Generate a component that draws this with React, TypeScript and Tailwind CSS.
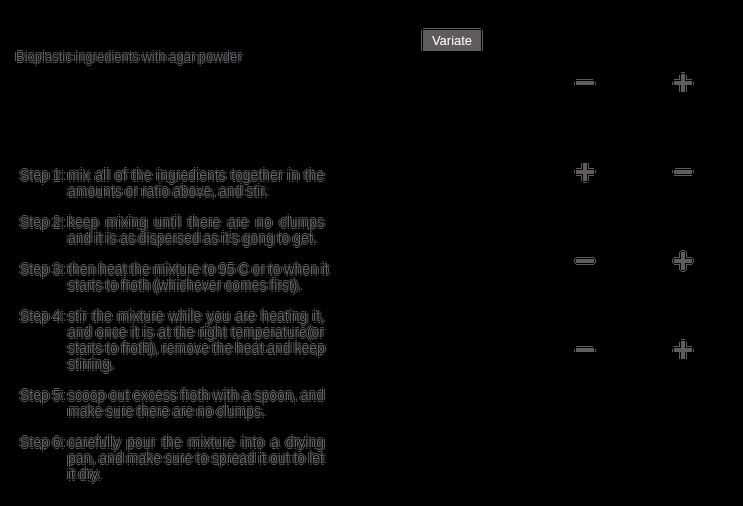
type Kind = "plus" | "minus";
type Edge = "top" | "bottom" | "round";

const steps = [
  { label: "Step 1:", lines: ["mix all of the ingredients together in the", "amounts or ratio above, and stir."] },
  { label: "Step 2:", lines: ["keep mixing until there are no clumps", "and it is as dispersed as it's gong to get."] },
  { label: "Step 3:", lines: ["then heat the mixture to 95 C or to when it", "starts to froth (whichever comes first)."] },
  {
    label: "Step 4:",
    lines: [
      "stir the mixture while you are heating it,",
      "and once it is at the right temperature(or",
      "starts to froth), remove the heat and keep",
      "stirring.",
    ],
  },
  { label: "Step 5:", lines: ["scoop out excess froth with a spoon, and", "make sure there are no clumps."] },
  {
    label: "Step 6:",
    lines: ["carefully pour the mixture into a drying", "pan, and make sure to spread it out to let", "it dry."],
  },
];

const rows: { kinds: [Kind, Kind]; edge: Edge }[] = [
  { kinds: ["minus", "plus"], edge: "top" },
  { kinds: ["plus", "minus"], edge: "bottom" },
  { kinds: ["minus", "plus"], edge: "round" },
  { kinds: ["minus", "plus"], edge: "top" },
];

const halo =
  "[text-shadow:1px_0_#000,-1px_0_#000,0_1px_#000,0_-1px_#000,2px_0_#626062,-2px_0_#626062,0_2px_#626062,0_-2px_#626062]";

const body = {
  plus: "M9 2h4v7h7v4h-7v7H9v-7H2V9h7z",
  minus: "M2 9h18v4H2z",
};

const edges = {
  plus: {
    top: "M9 0h4v1H9zM0 10h1v3H0zM21 10h1v3h-1zM7 3h1v5H2V7h5zM14 3h1v4h5v1h-6zM7 13h1v7H7zM14 13h1v7h-1z",
    bottom: "M9 21h4v1H9zM0 9h1v3H0zM21 9h1v3h-1zM7 2h1v6H2V7h5zM14 2h1v5h5v1h-6zM2 14h6v6H7v-5H2zM14 14h6v1h-5v5h-1z",
    round:
      "M9 0h4v1H9zM9 21h4v1H9zM8 1h1v1H8zM13 1h1v1h-1zM0 9h1v4H0zM21 9h1v4h-1zM1 8h1v1H1zM20 8h1v1h-1zM1 13h1v1H1zM20 13h1v1h-1zM7 2h1v6H2V7h5zM14 2h1v5h5v1h-6zM2 14h6v6H7v-5H2zM14 14h6v1h-5v5h-1zM8 20h1v1H8zM13 20h1v1h-1z",
  },
  minus: {
    top: "M2 7h17v1H2zM0 10h1v3H0zM21 10h1v3h-1z",
    bottom: "M3 7h16v1H3zM2 14h18v1H2zM0 9h1v3H0zM21 9h1v3h-1z",
    round: "M2 7h18v1H2zM2 14h18v1H2zM0 9h1v4H0zM21 9h1v4h-1zM1 8h1v1H1zM20 8h1v1h-1zM1 13h1v1H1zM20 13h1v1h-1z",
  },
};

function Sign({ kind, edge }: { kind: Kind; edge: Edge }) {
  return (
    <svg viewBox="0 0 22 24" className="h-6 w-[22px]" shapeRendering="crispEdges" aria-hidden="true">
      <path fill="#5e5c5d" d={body[kind]} />
      <path fill="#5e5c5d" d={edges[kind][edge]} />
    </svg>
  );
}

export default function App() {
  return (
    <main className="flex min-h-screen bg-black font-['Liberation_Sans',Arial,sans-serif] text-[#6a686a] antialiased">
      <section className="w-[423px] shrink-0 pt-[49px] pl-4 will-change-transform">
        <h1 className={`text-[13px] leading-4 ${halo}`}>Bioplastic ingredients with agar powder</h1>
        <ol className="mt-[102px] ml-1 flex flex-col gap-[15px] text-sm leading-4">
          {steps.map((step) => (
            <li key={step.label} className={`flex ${halo}`}>
              <span className="w-12 shrink-0">{step.label}</span>
              <p className="w-64 whitespace-nowrap">
                {step.lines.map((line, i) => (
                  <span
                    key={line}
                    className={i < step.lines.length - 1 ? "block text-justify [text-align-last:justify]" : "block"}
                  >
                    {line}{" "}
                  </span>
                ))}
              </p>
            </li>
          ))}
        </ol>
      </section>
      <section className="pt-[30px] will-change-transform">
        <button
          type="button"
          className="flex h-[21px] w-[58px] items-center justify-center bg-[#5e5c5d] text-[13px] leading-4 text-white [box-shadow:0_0_0_1px_#000,-2px_0_#5e5c5d,2px_0_#5e5c5d,0_-2px_#5e5c5d]"
        >
          Variate
        </button>
      </section>
      <section className="ml-auto flex flex-col gap-[65px] pt-[72px] pr-[49px]">
        {rows.map((row, i) => (
          <div key={i} className="flex gap-[76px]">
            {row.kinds.map((kind) => (
              <button key={kind} type="button" aria-label={`${kind} ${i + 1}`}>
                <Sign kind={kind} edge={row.edge} />
              </button>
            ))}
          </div>
        ))}
      </section>
    </main>
  );
}
